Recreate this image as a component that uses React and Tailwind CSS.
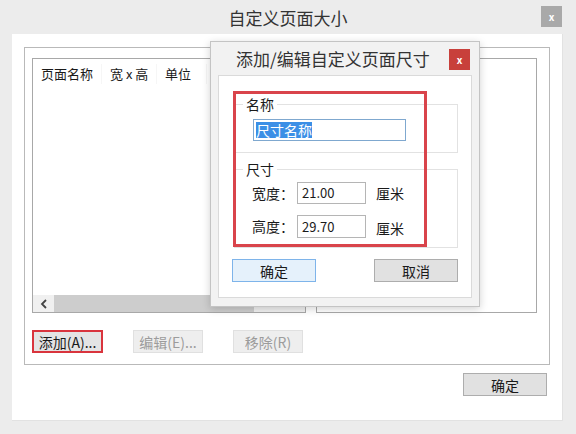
import React from "react";

const font = "font-['Microsoft_YaHei','Noto_Sans_CJK_SC','Noto_Sans',sans-serif]";

function WinButton({ children, className = "" }) {
  return (
    <button
      type="button"
      className={`h-[23px] w-[84px] flex items-center justify-center border text-[14px] leading-none ${className}`}
    >
      {children}
    </button>
  );
}

function EditDialog() {
  return (
    <div className="absolute left-[210px] top-[41px] w-[270px] h-[266px] bg-[#f2f2f2] border border-[#c4c4c4] shadow-[0_2px_8px_rgba(0,0,0,0.18)] flex flex-col">
      {/* title bar */}
      <div className="h-[33px] shrink-0 flex items-center pl-[25px] relative">
        <span className="text-[17px] text-[#333] leading-none">添加/编辑自定义页面尺寸</span>
        <div className="absolute right-[9px] top-[7px] w-[21px] h-[21px] bg-[#c8403b] flex items-center justify-center text-white text-[10px] font-bold leading-none">
          x
        </div>
      </div>

      {/* body */}
      <div className="mx-[7px] mb-[8px] flex-1 bg-white border border-[#dadada] px-[13px] pt-[21px]">
        <fieldset className="ml-[2px] border border-[#e2e2e2] px-[8px] pb-[11px]">
          <legend className="px-[3px] text-[14px] leading-[14px] text-[#1a1a1a]">名称</legend>
          <div className="ml-[10px] mt-[8px] w-[153px] h-[22px] border border-[#7fa8cf] flex items-center pl-[2px]">
            <span className="bg-[#3b8fe6] text-white text-[14px] leading-[16px]">尺寸名称</span>
          </div>
        </fieldset>

        <fieldset className="ml-[2px] mt-[9px] border border-[#e2e2e2] px-[8px] pb-[8px]">
          <legend className="px-[3px] text-[14px] leading-[14px] text-[#1a1a1a]">尺寸</legend>
          <div className="ml-[9px] mt-[6px] flex items-center text-[14px] text-[#1a1a1a]">
            <span className="w-[45px]">宽度：</span>
            <div className="w-[69px] h-[22px] border border-[#b5b5b5] flex items-center pl-[4px] text-[13px]">21.00</div>
            <span className="ml-[10px]">厘米</span>
          </div>
          <div className="ml-[9px] mt-[10px] flex items-center text-[14px] text-[#1a1a1a]">
            <span className="w-[45px]">高度：</span>
            <div className="w-[69px] h-[23px] border border-[#b5b5b5] flex items-center pl-[4px] text-[13px]">29.70</div>
            <span className="ml-[10px] pt-[4px]">厘米</span>
          </div>
        </fieldset>

        <div className="mt-[11px] flex justify-between text-[#1a1a1a]">
          <WinButton className="bg-[#e5f1fb] border-[#7eb4ea]">确定</WinButton>
          <WinButton className="bg-[#e1e1e1] border-[#adadad]">取消</WinButton>
        </div>
      </div>

      {/* highlight frame */}
      <div className="absolute left-[22px] top-[49px] w-[194px] h-[156px] border-[3px] border-[#d9444b]" />
    </div>
  );
}

export default function App() {
  return (
    <div className={`relative w-[576px] h-[434px] bg-[#ececec] flex flex-col ${font}`}>
      {/* window title */}
      <div className="h-[34px] shrink-0 flex items-center justify-center relative">
        <span className="text-[17px] text-[#333] leading-none">自定义页面大小</span>
        <div className="absolute right-[14px] top-[6px] w-[21px] h-[21px] bg-[#a9a9a9] flex items-center justify-center text-white text-[10px] font-bold leading-none">
          x
        </div>
      </div>

      {/* content */}
      <div className="ml-[12px] mr-[13px] mb-[13px] flex-1 bg-white border-r border-b border-[#e2e2e2] pt-[13px] px-[12px] flex flex-col">
        <div className="h-[318px] border border-[#b9b9b9] pl-[7px] pr-[12px] pt-[10px] flex flex-col">
          <div className="flex gap-[10px]">
            {/* list */}
            <div className="w-[274px] h-[255px] border border-[#a8a8a8] flex flex-col">
              <div className="h-[30px] flex items-center text-[13px] text-[#1a1a1a]">
                <span className="w-[69px] pl-[8px] border-r border-[#f6f6f6]">页面名称</span>
                <span className="w-[55px] pl-[8px] border-r border-[#f6f6f6]">宽 x 高</span>
                <span className="w-[50px] pl-[8px] border-r border-[#f6f6f6]">单位</span>
              </div>
              <div className="flex-1" />
              <div className="h-[17px] bg-[#f0f0f0] flex items-center">
                <span className="w-[21px] flex items-center justify-center">
                  <svg width="8" height="10" viewBox="0 0 8 10">
                    <path d="M6 1 L2 5 L6 9" stroke="#444" strokeWidth="1.8" fill="none" />
                  </svg>
                </span>
                <div className="w-[200px] h-full bg-[#cdcdcd]" />
              </div>
            </div>
            {/* preview */}
            <div className="w-[221px] h-[255px] border border-[#a8a8a8]" />
          </div>

          <div className="mt-[17px] flex gap-[30px] text-[14px]">
            <button type="button" className="w-[71px] h-[23px] border-2 border-[#d9343d] bg-[#e4e4e4] text-[#1a1a1a] flex items-center justify-center leading-none whitespace-nowrap">
              添加(A)...
            </button>
            <button type="button" className="w-[70px] h-[23px] border border-[#e0e0e0] bg-[#eeeeee] text-[#9c9c9c] flex items-center justify-center leading-none whitespace-nowrap">
              编辑(E)...
            </button>
            <button type="button" className="w-[70px] h-[23px] border border-[#e0e0e0] bg-[#eeeeee] text-[#9c9c9c] flex items-center justify-center leading-none whitespace-nowrap">
              移除(R)
            </button>
          </div>
        </div>

        <div className="mt-[8px] flex justify-end pr-[3px]">
          <WinButton className="bg-[#e1e1e1] border-[#adadad] text-[#1a1a1a]">确定</WinButton>
        </div>
      </div>

      <EditDialog />
    </div>
  );
}
